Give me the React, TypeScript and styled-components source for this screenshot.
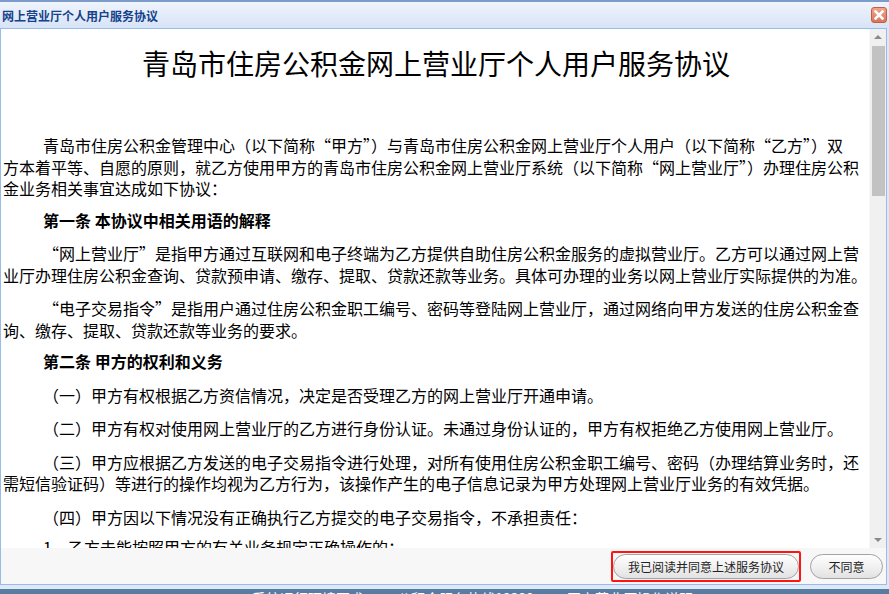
import React from 'react';
import styled, { createGlobalStyle } from 'styled-components';

const GlobalStyle = createGlobalStyle`
    html, body {
        margin: 0;
        padding: 0;
    }
    body {
        background: #587c9f;
        font-family: "Noto Sans CJK SC", "Noto Sans", sans-serif;
        overflow: hidden;
    }
`;

const Page = styled.div`
    width: 889px;
    height: 594px;
    overflow: hidden;
    display: flex;
    flex-direction: column;
`;

const Win = styled.div`
    flex-shrink: 0;
    height: 589px;
    box-sizing: border-box;
    border-top: 2px solid #7c9dca;
    background: linear-gradient(#eff4fc, #d7e4f7 26px, #dfe8f6 27px);
    display: flex;
    flex-direction: column;
`;

const TitleBar = styled.div`
    height: 26px;
    flex-shrink: 0;
    display: flex;
    align-items: center;
    justify-content: space-between;
    padding: 0 2px 0 2px;
`;

const TitleText = styled.span`
    font-size: 12px;
    font-weight: bold;
    color: #15428b;
`;

const CloseBtn = styled.div`
    width: 14px;
    height: 14px;
    border: 1px solid #c25f43;
    border-radius: 3px;
    background: linear-gradient(#f0a58b, #dc7456);
    display: flex;
    align-items: center;
    justify-content: center;
`;

const Panel = styled.div`
    flex: 1;
    min-height: 0;
    margin: 0 2px 4px 0;
    border: 1px solid #99bbe8;
    background: #fff;
    display: flex;
    flex-direction: column;
`;

const Content = styled.div`
    flex: 1;
    min-height: 0;
    display: flex;
    overflow: hidden;
`;

const Doc = styled.div`
    flex: 1;
    overflow: hidden;
    padding-left: 2px;
    color: #000;
    font-size: 16px;
    line-height: 21.5px;
`;

const DocTitle = styled.h1`
    margin: 16px 0 0;
    font-size: 28px;
    font-weight: normal;
    line-height: 36px;
    text-align: center;
`;

const Para = styled.p<{ $gap?: number }>`
    margin: ${p => p.$gap ?? 12}px 0 0;
    text-indent: 40px;
    white-space: nowrap;
`;

const Heading = styled.h2`
    margin: 10px 0 0;
    padding-left: 40px;
    font-size: 16px;
    font-weight: bold;
    line-height: 21.5px;
`;

const ScrollBar = styled.div`
    width: 16px;
    flex-shrink: 0;
    background: #f0f0f0;
    border-left: 1px solid #f7f7f7;
    display: flex;
    flex-direction: column;
`;

const ScrollArrow = styled.div<{ $down?: boolean }>`
    height: 16px;
    flex-shrink: 0;
    display: flex;
    align-items: center;
    justify-content: center;
    &::after {
        content: '';
        border-left: 4px solid transparent;
        border-right: 4px solid transparent;
        ${p => p.$down ? 'border-top: 4px solid #8a8a8a;' : 'border-bottom: 4px solid #8a8a8a;'}
    }
`;

const ScrollThumb = styled.div`
    height: 150px;
    margin: 1px 1px 0 2px;
    background: #c2c2c2;
`;

const ScrollTrack = styled.div`
    flex: 1;
`;

const Footer = styled.div`
    height: 36px;
    flex-shrink: 0;
    background: #f7f7f7;
    display: flex;
    align-items: center;
    justify-content: flex-end;
    gap: 9px;
    padding-right: 3px;
`;

const Highlight = styled.div`
    border: 2px solid #ff1414;
    border-radius: 2px;
    padding: 1px 0;
    display: flex;
`;

const PillButton = styled.button<{ $w: number }>`
    width: ${p => p.$w}px;
    height: 25px;
    border: 1px solid #a3a3a3;
    border-radius: 13px;
    background: linear-gradient(#fefefe, #f1f1f1 50%, #e2e2e2);
    font-family: "Noto Sans CJK SC", "Noto Sans", sans-serif;
    font-size: 12px;
    color: #222;
    padding: 0;
    cursor: pointer;
`;

const Strip = styled.div`
    padding: 1px 0 0 252px;
    color: #fff;
    font-size: 14px;
    line-height: 16px;
    white-space: nowrap;
    word-spacing: 30px;
`;

const CloseIcon = () => (
    <svg width="10" height="10" viewBox="0 0 10 10">
        <path d="M1.5 1.5 L8.5 8.5 M8.5 1.5 L1.5 8.5" stroke="#fff" strokeWidth="2.6" strokeLinecap="square" />
    </svg>
);

const paragraphs = {
    intro: [
        '青岛市住房公积金管理中心（以下简称“甲方”）与青岛市住房公积金网上营业厅个人用户（以下简称“乙方”）双',
        '方本着平等、自愿的原则，就乙方使用甲方的青岛市住房公积金网上营业厅系统（以下简称“网上营业厅”）办理住房公积',
        '金业务相关事宜达成如下协议：',
    ],
    hall: [
        '“网上营业厅”是指甲方通过互联网和电子终端为乙方提供自助住房公积金服务的虚拟营业厅。乙方可以通过网上营',
        '业厅办理住房公积金查询、贷款预申请、缴存、提取、贷款还款等业务。具体可办理的业务以网上营业厅实际提供的为准。',
    ],
    order: [
        '“电子交易指令”是指用户通过住房公积金职工编号、密码等登陆网上营业厅，通过网络向甲方发送的住房公积金查',
        '询、缴存、提取、贷款还款等业务的要求。',
    ],
    one: ['（一）甲方有权根据乙方资信情况，决定是否受理乙方的网上营业厅开通申请。'],
    two: ['（二）甲方有权对使用网上营业厅的乙方进行身份认证。未通过身份认证的，甲方有权拒绝乙方使用网上营业厅。'],
    three: [
        '（三）甲方应根据乙方发送的电子交易指令进行处理，对所有使用住房公积金职工编号、密码（办理结算业务时，还',
        '需短信验证码）等进行的操作均视为乙方行为，该操作产生的电子信息记录为甲方处理网上营业厅业务的有效凭据。',
    ],
    four: ['（四）甲方因以下情况没有正确执行乙方提交的电子交易指令，不承担责任：'],
    item1: ['1、乙方未能按照甲方的有关业务规定正确操作的；'],
};

const Lines: React.FC<{ lines: string[] }> = ({ lines }) => (
    <>
        {lines.map((l, i) => (
            <React.Fragment key={i}>
                {i > 0 && <br />}
                {l}
            </React.Fragment>
        ))}
    </>
);

const App: React.FC = () => {
    return (
        <Page lang="zh-CN">
            <GlobalStyle />
            <Win>
                <TitleBar>
                    <TitleText>网上营业厅个人用户服务协议</TitleText>
                    <CloseBtn><CloseIcon /></CloseBtn>
                </TitleBar>
                <Panel>
                    <Content>
                        <Doc>
                            <DocTitle>青岛市住房公积金网上营业厅个人用户服务协议</DocTitle>
                            <Para $gap={54}><Lines lines={paragraphs.intro} /></Para>
                            <Heading>第一条 本协议中相关用语的解释</Heading>
                            <Para><Lines lines={paragraphs.hall} /></Para>
                            <Para><Lines lines={paragraphs.order} /></Para>
                            <Heading>第二条 甲方的权利和义务</Heading>
                            <Para><Lines lines={paragraphs.one} /></Para>
                            <Para><Lines lines={paragraphs.two} /></Para>
                            <Para><Lines lines={paragraphs.three} /></Para>
                            <Para><Lines lines={paragraphs.four} /></Para>
                            <Para $gap={9}><Lines lines={paragraphs.item1} /></Para>
                        </Doc>
                        <ScrollBar>
                            <ScrollArrow />
                            <ScrollThumb />
                            <ScrollTrack />
                            <ScrollArrow $down />
                        </ScrollBar>
                    </Content>
                    <Footer>
                        <Highlight>
                            <PillButton $w={186}>我已阅读并同意上述服务协议</PillButton>
                        </Highlight>
                        <PillButton $w={73}>不同意</PillButton>
                    </Footer>
                </Panel>
            </Win>
            <Strip>系统运行环境要求 公积金服务热线12329 网上营业厅操作说明</Strip>
        </Page>
    );
};

export default App;
